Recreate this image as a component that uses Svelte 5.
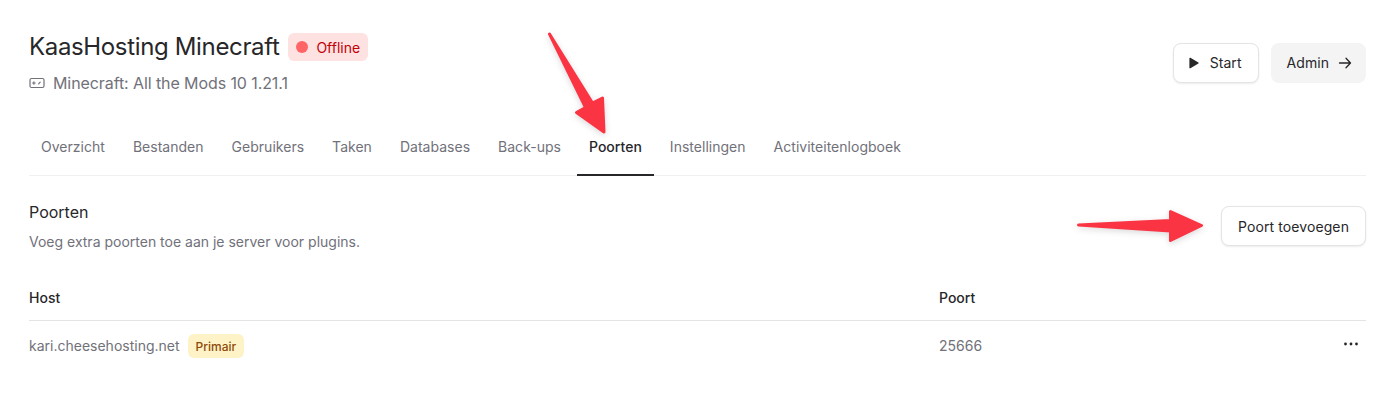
<script>
    const tabs = ['Overzicht', 'Bestanden', 'Gebruikers', 'Taken', 'Databases', 'Back-ups', 'Poorten', 'Instellingen', 'Activiteitenlogboek'];
    let active = 'Poorten';
</script>

<div class="page">
	<header class="top">
		<div>
			<div class="title-row">
				<h1>KaasHosting Minecraft</h1>
				<span class="status"><i></i>Offline</span>
			</div>
			<div class="sub">
				<svg width="16" height="16" viewBox="0 0 16 16" fill="none" stroke="#71717a" stroke-width="1.2" stroke-linecap="round">
					<rect x="1" y="3.500" width="14" height="9" rx="1.500" />
					<path d="M3.600 8h2.600M4.900 6.800v2.400M9.600 8.800l1.600-1.600" />
				</svg>
				Minecraft: All the Mods 10 1.21.1
			</div>
		</div>
		<div class="actions">
			<button class="btn outline start">
				<svg width="12" height="12" viewBox="0 0 12 12"><path d="M1.400 1.300c0-.5.5-.8 1-.5l8 4.700c.4.2.4.8 0 1l-8 4.700c-.5.3-1 0-1-.5z" fill="#27272a" /></svg>
				Start
			</button>
			<button class="btn ghost admin">
				Admin
				<svg width="14" height="14" viewBox="0 0 14 14" fill="none" stroke="#27272a" stroke-width="1.300" stroke-linecap="round" stroke-linejoin="round"><path d="M1.500 7h11M8 2.200 12.500 7 8 11.800" /></svg>
			</button>
		</div>
	</header>

	<nav class="tabs">
		{#each tabs as tab}
			<span class="tab" class:active={tab === active}>{tab}</span>
		{/each}
	</nav>

	<section class="head">
		<div>
			<h2>Poorten</h2>
			<p>Voeg extra poorten toe aan je server voor plugins.</p>
		</div>
		<button class="btn outline add">Poort toevoegen</button>
	</section>

	<div class="table">
		<div class="row th">
			<span>Host</span>
			<span>Poort</span>
			<span></span>
		</div>
		<div class="row td">
			<span class="host">kari.cheesehosting.net <b class="tag">Primair</b></span>
			<span>25666</span>
			<span class="more">
				<svg width="16" height="16" viewBox="0 0 16 16" fill="#27272a"><circle cx="2.500" cy="8" r="1.400" /><circle cx="8" cy="8" r="1.400" /><circle cx="13.500" cy="8" r="1.400" /></svg>
			</span>
		</div>
	</div>

	<svg class="arrows" width="1394" height="417" viewBox="0 0 1394 417">
		<g fill="#fb3444" stroke="#fb3444" stroke-width="3" stroke-linejoin="round" class="arrow">
			<path d="M549.500 34 592.500 103 602.500 98 604 132 576.500 112.500 585.500 107.500 Z" />
			<path d="M1078.500 225 1170.500 220.500 1170.500 211.500 1201.500 225.500 1170.500 240.500 1170.500 231 Z" />
		</g>
	</svg>
</div>

<style>
    :global(body) {
        background: #fff;
        font-family: Inter, "Liberation Sans", sans-serif;
        color: #27272a;
    }

    .page {
        position: relative;
        height: 417px;
        padding: 30px 28px 0 29px;
        box-sizing: border-box;
        overflow: hidden;
    }

    .top {
        display: flex;
        justify-content: space-between;
        align-items: center;
        height: 65px;
    }

    .title-row {
        display: flex;
        align-items: center;
        gap: 9px;
    }

    h1 {
        margin: 0;
        font-size: 24px;
        line-height: 34px;
        font-weight: 400;
        letter-spacing: -0.35px;
    }

    .status {
        display: flex;
        align-items: center;
        gap: 8px;
        height: 28px;
        padding: 0 8px;
        border-radius: 6px;
        background: #fee2e2;
        color: #c10007;
        font-size: 14px;
    }

    .status i {
        width: 12px;
        height: 12px;
        border-radius: 50%;
        background: #ff6467;
    }

    .sub {
        display: flex;
        align-items: center;
        gap: 8px;
        margin-top: 7px;
        font-size: 16px;
        line-height: 24px;
        letter-spacing: -0.09px;
        color: #71717a;
    }

    .actions {
        display: flex;
        gap: 12px;
    }

    .btn {
        display: flex;
        align-items: center;
        height: 40px;
        border-radius: 8px;
        font: 14px Inter, "Liberation Sans", sans-serif;
        letter-spacing: 0.06px;
        color: #27272a;
        box-sizing: border-box;
    }

    .outline {
        background: #fff;
        border: 1px solid #e4e4e7;
        box-shadow: 0 1px 2px rgba(0, 0, 0, 0.08);
    }

    .ghost {
        background: #f4f4f5;
        border: none;
    }

    .start {
        gap: 10px;
        padding: 0 16px 0 14px;
    }

    .admin {
        gap: 9px;
        padding: 0 14px 0 16px;
    }

    .tabs {
        display: flex;
        gap: 4px;
        margin-top: 16px;
        height: 65px;
        border-bottom: 1px solid #f0f0f2;
        box-sizing: border-box;
    }

    .tab {
        display: flex;
        align-items: center;
        padding: 8px 12px 0;
        margin-bottom: -1px;
        font-size: 14px;
        letter-spacing: 0.02px;
        color: #71717a;
        border-bottom: 2px solid transparent;
    }

    .tab.active {
        color: #27272a;
        font-weight: 450;
        border-bottom-color: #27272a;
    }

    .head {
        display: flex;
        justify-content: space-between;
        align-items: center;
        margin-top: 24px;
        height: 52px;
    }

    h2 {
        margin: 0;
        font-size: 16px;
        line-height: 24px;
        font-weight: 400;
    }

    p {
        margin: 8px 0 0;
        font-size: 14px;
        line-height: 20px;
        color: #71717a;
    }

    .add {
        padding: 0 16px;
        letter-spacing: 0.1px;
    }

    .table {
        margin-top: 22px;
    }

    .row {
        display: grid;
        grid-template-columns: 910px 1fr 40px;
        align-items: center;
        font-size: 14px;
    }

    .th {
        height: 46px;
        font-weight: 450;
        border-bottom: 1px solid #e4e4e7;
    }

    .td {
        height: 48px;
        color: #71717a;
    }

    .host {
        display: flex;
        align-items: center;
        gap: 8px;
    }

    .tag {
        display: inline-flex;
        align-items: center;
        height: 24px;
        margin-top: 2px;
        padding: 0 8px;
        border-radius: 6px;
        background: #fef3c6;
        color: #8f4a08;
        font-size: 12px;
        font-weight: 450;
    }

    .more {
        display: flex;
        justify-content: flex-end;
        padding-right: 7px;
        margin-top: -2px;
    }

    .arrows {
        position: absolute;
        top: 0;
        left: 0;
        pointer-events: none;
    }

    .arrow {
        filter: drop-shadow(0 2px 3px rgba(0, 0, 0, 0.15));
    }
</style>
